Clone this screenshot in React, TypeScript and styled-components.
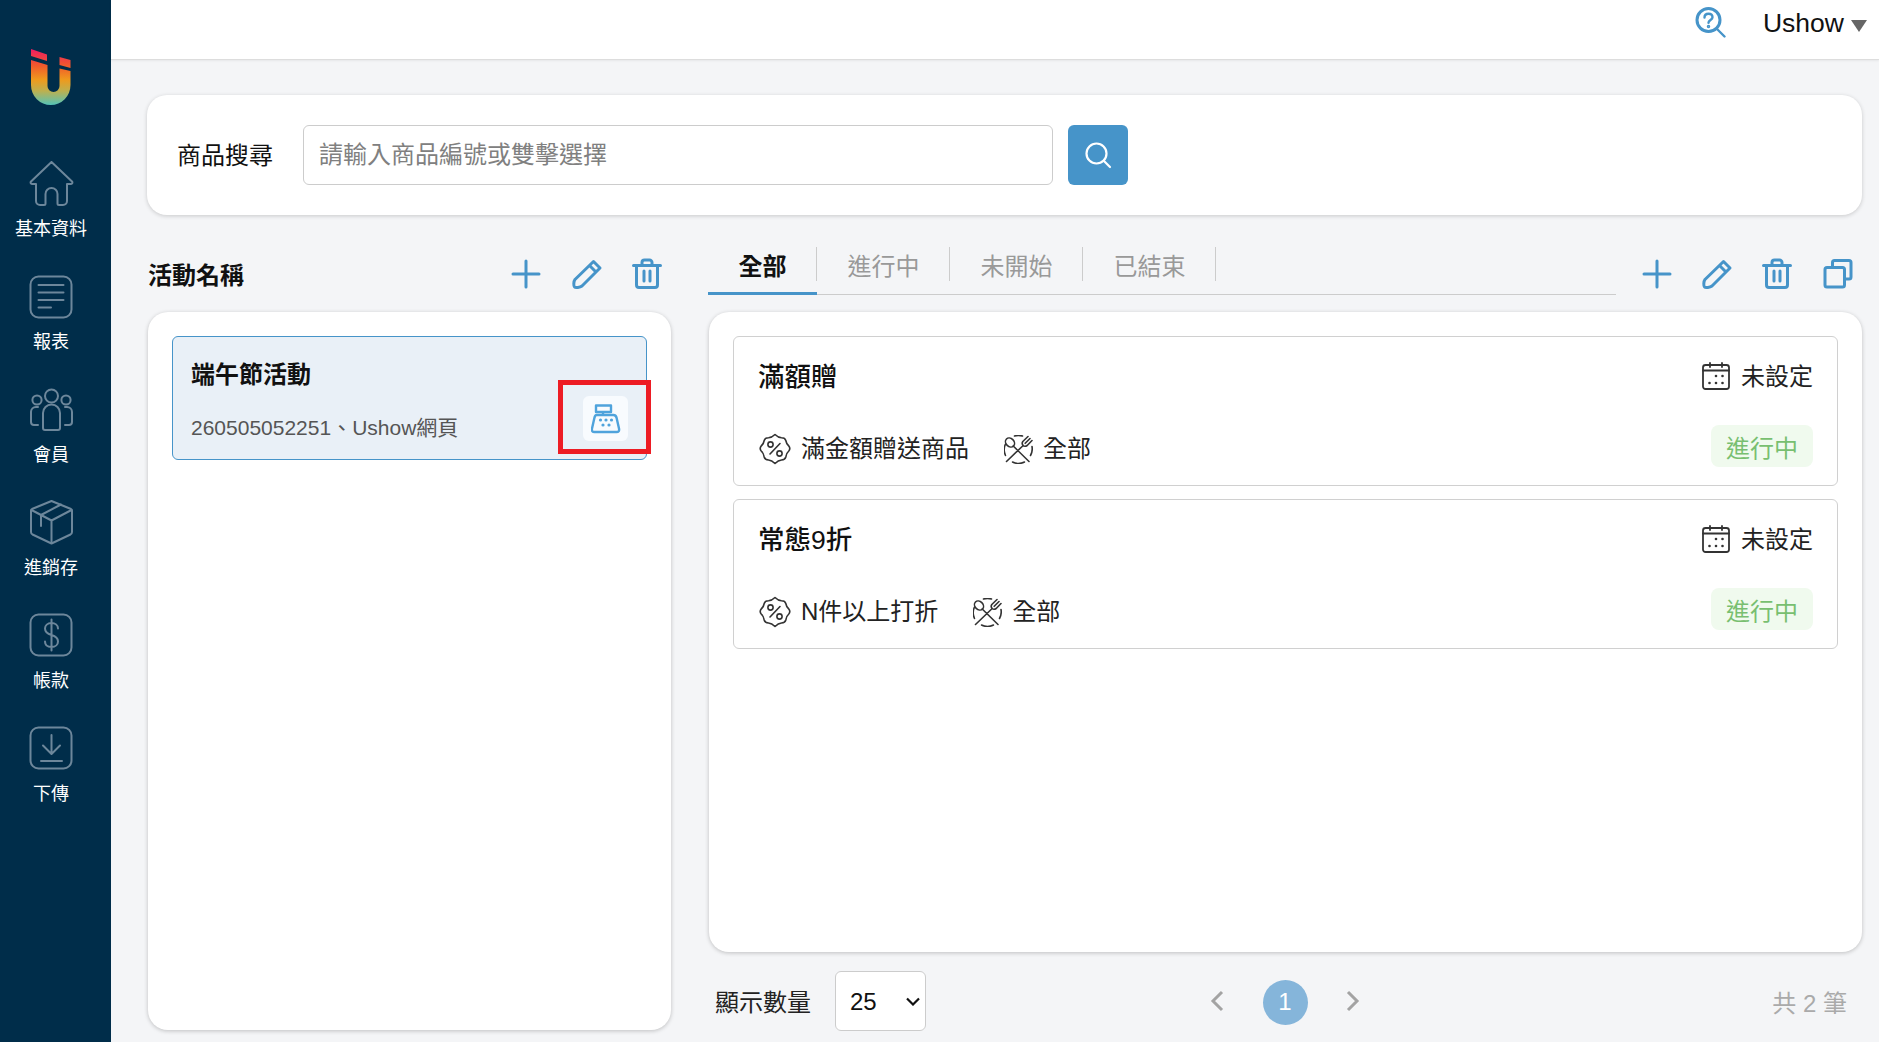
import React from "react";
import styled, { createGlobalStyle } from "styled-components";

const Global = createGlobalStyle`
  html, body { margin: 0; padding: 0; height: 100%; background: #f4f5f7; overflow: hidden; }
  #root { height: 100%; }
  * { box-sizing: border-box; }
  body { font-family: "Liberation Sans", "Noto Sans CJK TC", sans-serif; color: #111; }
`;

const Shell = styled.div`display: flex; height: 1042px;`;
const Sidebar = styled.nav`
  width: 111px; flex: none; background: #002d4a;
  display: flex; flex-direction: column; align-items: center; padding: 49px 9px 0 0;
`;
const LogoWrap = styled.div`width: 40px; height: 56px; margin-bottom: 56px;`;
const NavItem = styled.div`
  height: 113px; width: 100%; display: flex; flex-direction: column; align-items: center;
  color: #fff; font-size: 18px; line-height: 24px;
  svg { display: block; margin-bottom: 11px; }
`;
const Main = styled.div`flex: 1; min-width: 0; display: flex; flex-direction: column;`;
const TopBar = styled.header`
  height: 60px; flex: none; background: #fff; border-bottom: 1px solid #ddd;
  box-shadow: 0 1px 2px rgba(0,0,0,.06);
  display: flex; align-items: flex-start; justify-content: flex-end; padding: 7px 12px 0 0;
`;
const UserName = styled.span`font-size: 26.5px; line-height: 32px; margin-left: 37px; margin-right: 7px; color: #111;`;
const Caret = styled.span`
  width: 0; height: 0; margin-top: 13px;
  border-left: 8px solid transparent; border-right: 8px solid transparent; border-top: 12px solid #666;
`;
const Content = styled.div`flex: 1; min-height: 0; padding: 35px 17px 12px 36px; display: flex; flex-direction: column;`;
const SearchCard = styled.section`
  height: 120px; flex: none; background: #fff; border-radius: 20px;
  box-shadow: 0 1px 4px rgba(0,0,0,.18);
  display: flex; align-items: center; padding-left: 30px;
`;
const SearchLabel = styled.label`font-size: 24px; line-height: 32px; width: 126px; margin-top: 2px;`;
const SearchInput = styled.input`
  width: 750px; height: 60px; border: 1px solid #ccc; border-radius: 6px; padding: 0 15px;
  font: 24px "Liberation Sans", "Noto Sans CJK TC", sans-serif; outline: none; background: #fff;
  &::placeholder { color: #808080; opacity: 1; }
`;
const SearchButton = styled.button`
  width: 60px; height: 60px; margin-left: 15px; border: 0; border-radius: 6px; background: #4694c9;
  display: flex; align-items: center; justify-content: center; padding: 0;
`;
const Columns = styled.div`flex: 1; min-height: 0; display: grid; grid-template-columns: 525px 1fr; column-gap: 37px;`;
const Column = styled.div`display: flex; flex-direction: column; min-height: 0;`;
const LeftColumn = styled(Column)`padding: 0 1px;`;
const LeftHead = styled.div`height: 97px; flex: none; display: flex; align-items: flex-start; padding-top: 45px; justify-content: space-between;`;
const HeadTitle = styled.h2`margin: 0; font-size: 24px; line-height: 32px; font-weight: 700;`;
const IconRow = styled.div`display: flex; gap: 24.5px; margin-top: -4px; margin-right: 6px;`;
const IconSlot = styled.span`width: 36px; height: 36px; display: flex; align-items: center; justify-content: center;`;
const RightHead = styled.div`height: 97px; flex: none; display: flex; align-items: flex-start; padding-top: 32px;`;
const Tabs = styled.div`width: 908px; height: 48px; margin-left: -1px; display: flex; border-bottom: 1px solid #ccc; flex: none;`;
const Tab = styled.div<{ $active?: boolean }>`
  width: 133px; height: 47px; position: relative; display: flex; align-items: flex-start; justify-content: center;
  padding-top: 4px;
  font-size: 24px; line-height: 32px;
  font-weight: ${p => (p.$active ? 700 : 400)};
  color: ${p => (p.$active ? "#111" : "#999")};
  ${p => p.$active ? "width: 109px; border-bottom: 3px solid #4694c9; height: 48px;" : ""}
  &::after { content: ""; position: absolute; right: 0; top: 0; height: 34px; width: 1px; background: #ccc; }
`;
const RightIcons = styled(IconRow)`margin: 9px 0 0 23px; gap: 24.2px;`;
const ListCard = styled.section<{ $gap: number }>`
  flex: 1; min-height: 0; background: #fff; border-radius: 20px; padding: 24px;
  box-shadow: 0 1px 4px rgba(0,0,0,.22);
  display: flex; flex-direction: column; gap: ${p => p.$gap}px;
`;
const ActivityItem = styled.article`
  position: relative; height: 124px; background: #e9f0f7; border: 1px solid #4694c9; border-radius: 6px;
  padding: 20px 18px 0;
`;
const ActivityName = styled.div`font-size: 24px; font-weight: 700; line-height: 36px;`;
const ActivityInfo = styled.div`font-size: 21px; line-height: 28px; color: #555; margin-top: 21px;`;
const Highlight = styled.div`
  position: absolute; left: 385px; top: 43px; width: 93px; height: 74px; border: 5px solid #ed1c24;
  display: flex; align-items: center; justify-content: center;
`;
const StoreChip = styled.div`
  width: 45px; height: 45px; margin: 3px 0 0 2px; background: #f8fbfe; border-radius: 6px;
  display: flex; align-items: center; justify-content: center;
`;
const Entry = styled.article`
  height: 150px; flex: none; border: 1px solid #d0d0d0; border-radius: 6px; padding: 0 24px;
  display: flex; flex-direction: column;
`;
const EntryTop = styled.div`height: 80px; display: flex; align-items: center; justify-content: space-between;`;
const EntryName = styled.div`font-size: 26.5px; font-weight: 500; line-height: 34px;`;
const DateBox = styled.div`display: flex; align-items: center; gap: 11px; font-size: 24px; line-height: 32px; color: #222; margin-top: -1px; svg { margin-top: -2px; }`;
const EntryBottom = styled.div`height: 48px; margin-top: 8px; display: flex; align-items: center; justify-content: space-between;`;
const Tags = styled.div`display: flex; align-items: center; margin-left: 1px;`;
const Tag = styled.div`
  display: flex; align-items: center; font-size: 24px; line-height: 32px; color: #222; margin-right: 35px;
  svg { margin-right: 10px; display: block; }
`;
const Status = styled.div`
  width: 102px; height: 42px; background: #f0faee; color: #78bf70; border-radius: 8px;
  display: flex; align-items: center; justify-content: center; font-size: 24px; margin-top: -6px;
`;
const Pager = styled.div`height: 78px; flex: none; display: flex; align-items: center; padding: 20px 15px 0 6px;`;
const PagerLabel = styled.span`font-size: 24px; line-height: 32px; color: #222; margin-top: 3px;`;
const PageSelect = styled.select`
  appearance: none; width: 91px; height: 60px; margin-left: 24px; border: 1px solid #ccc; border-radius: 6px;
  background: #fff url("data:image/svg+xml,%3Csvg xmlns='http://www.w3.org/2000/svg' width='14' height='9'%3E%3Cpath d='M1 1.500L7 7.500L13 1.500' fill='none' stroke='%23111' stroke-width='2.200'/%3E%3C/svg%3E") no-repeat right 5px center;
  font: 24px "Liberation Sans", sans-serif; padding-left: 14px; color: #111; outline: none;
`;
const PageNav = styled.div`
  margin-left: 284px; display: flex; align-items: center; width: 150px; justify-content: space-between;
`;
const PageDot = styled.div`
  width: 45px; height: 45px; border-radius: 50%; background: #85b5da; color: #fff;
  display: flex; align-items: center; justify-content: center; font-size: 24px; margin-top: 2px;
`;
const Total = styled.span`margin-left: auto; font-size: 24px; color: #aaa;`;

const Logo = () => (
  <LogoWrap>
    <svg width="40" height="56" viewBox="0 0 40 56">
      <defs>
        <linearGradient id="lg" x1="0" y1="0" x2="0" y2="1">
          <stop offset="0" stopColor="#ee1c62" />
          <stop offset="0.3" stopColor="#f15a2b" />
          <stop offset="0.55" stopColor="#ee9a1d" />
          <stop offset="0.75" stopColor="#bdb04f" />
          <stop offset="1" stopColor="#54c4b8" />
        </linearGradient>
      </defs>
      <path fill="url(#lg)" d="M0 0 L16 5.500 V12 L0 7 Z M28.500 8 L39.500 11 V19 L28.500 16 Z M0 11 L16.500 16 V37 A6 6 0 0 0 28.500 37 V19.500 L39.500 22 V36 A19.750 20 0 0 1 0 36 Z" />
    </svg>
  </LogoWrap>
);

const NavIcon = ({ children }: { children: React.ReactNode }) => (
  <svg width="45" height="45" viewBox="0 0 45 45" fill="none" stroke="#6d879b" strokeWidth="2" strokeLinecap="round" strokeLinejoin="round">{children}</svg>
);
const navIcons: Record<string, React.ReactNode> = {
  home: <path d="M22.500 1 L43 20.500 a1.500 1.500 0 0 1 -1 2.500 H38 V40 a4 4 0 0 1 -4 4 H30 a1.500 1.500 0 0 1 -1.500 -1.500 V33 a6 6 0 0 0 -12 0 V42.500 a1.500 1.500 0 0 1 -1.500 1.500 H11 a4 4 0 0 1 -4 -4 V23 H3 a1.500 1.500 0 0 1 -1 -2.500 Z" />,
  report: <><rect x="1.500" y="2.500" width="41" height="41" rx="8" /><path d="M9.500 11h25M9.500 18.500h25M9.500 26h25M9.500 33.500h12.500" /></>,
  member: <><circle cx="22.500" cy="9" r="6.500" /><circle cx="8" cy="13" r="4.600" /><circle cx="37" cy="13" r="4.600" /><path d="M14 41 V26 a8.500 8.500 0 0 1 8.500 -8.500 a8.500 8.500 0 0 1 8.500 8.500 V41 a2 2 0 0 1 -2 2 H16 a2 2 0 0 1 -2 -2 Z" /><path d="M9 38 H5 a3 3 0 0 1 -3 -3 V25 a5 5 0 0 1 5 -5 h2 M36 38 h4 a3 3 0 0 0 3 -3 V25 a5 5 0 0 0 -5 -5 h-2" /></>,
  box: <><path d="M22.500 1 L42 9 a2 2 0 0 1 1 2 V32 a3 3 0 0 1 -1.500 2.500 L22.500 43.500 L3.500 34.500 A3 3 0 0 1 2 32 V11 a2 2 0 0 1 1 -2 Z" /><path d="M2.500 10 L22.500 20.500 L42.500 10 M22.500 20.500 V43 M12 15 V26 M12 15 L32 4.500" /></>,
  money: <><rect x="1.500" y="1.500" width="41" height="41" rx="8" /><path d="M29 15.500 C29 12 26 10 22.500 10 C18.500 10 16 12.500 16 15.500 C16 19.500 19 21 22.500 22 C26 23 29 24.500 29 28.500 C29 31.500 26.500 34 22.500 34 C18.500 34 16 32 16 28.500 M22.500 6.500 V37.500" /></>,
  down: <><rect x="1.500" y="1.500" width="41" height="41" rx="8" /><path d="M22.500 9 V27 M14 19.500 L22.500 28 L31 19.500 M12 35 H33" /></>,
};
const navItems = [["home", "基本資料"], ["report", "報表"], ["member", "會員"], ["box", "進銷存"], ["money", "帳款"], ["down", "下傳"]];

const Act = ({ children }: { children: React.ReactNode }) => (
  <IconSlot>
    <svg width="32" height="32" viewBox="0 0 32 32" fill="none" stroke="#4694c9" strokeWidth="3" strokeLinecap="round" strokeLinejoin="round">{children}</svg>
  </IconSlot>
);
const Plus = () => <Act><path d="M3 16H29M16 3V29" /></Act>;
const Pencil = () => <Act><path d="M22.500 3.500 L29 10 L11 28 C9 29.500 4.500 30 3.500 29 C2.500 28 2.500 23.500 4 21.500 Z M18.500 7.500 L25 14" /></Act>;
const Trash = () => <Act><path d="M2.500 7.500H29.500M11 7V4.500A2.500 2.500 0 0 1 13.500 2H18.500A2.500 2.500 0 0 1 21 4.500V7M5.500 8V27A2.500 2.500 0 0 0 8 29.500H24A2.500 2.500 0 0 0 26.500 27V8M13 13V23M19 13V23" /></Act>;
const Copy = () => <Act><path d="M10.500 9V4.500A2 2 0 0 1 12.500 2.500H27A2 2 0 0 1 29 4.500V19A2 2 0 0 1 27 21H22.500" /><rect x="3" y="9.500" width="19.500" height="19.500" rx="2" /></Act>;

const Calendar = () => (
  <svg width="28" height="28" viewBox="0 0 28 28" fill="none" stroke="#333" strokeWidth="1.800" strokeLinecap="round">
    <rect x="1" y="3" width="26" height="24" rx="2.500" />
    <path d="M1 8.500H27M8 1V5M20 1V5" />
    <g fill="#333" stroke="none"><circle cx="14" cy="14" r="1.300" /><circle cx="20.500" cy="14" r="1.300" /><circle cx="7.500" cy="21" r="1.300" /><circle cx="14" cy="21" r="1.300" /><circle cx="20.500" cy="21" r="1.300" /></g>
  </svg>
);
const PercentBadge = () => (
  <svg width="32" height="32" viewBox="0 0 32 32" fill="none" stroke="#333" strokeWidth="1.600" strokeLinecap="round" strokeLinejoin="round">
    <path d="M16 1.500 C18 3.500 20 4.600 22.500 4.700 C24.500 4.700 26.300 5.500 26.800 7.500 C27.200 9.800 27.800 11.500 29.800 13 C31 14.500 31 16.500 29.800 18 C28 19.500 27.200 21.500 26.800 24 C26.300 26 24.500 26.800 22.500 27 C20 27.200 18 28.500 16 30.500 C14 28.500 12 27.200 9.500 27 C7.500 26.800 5.700 26 5.200 24 C4.800 21.500 4 19.500 2.200 18 C1 16.500 1 14.500 2.200 13 C4.200 11.500 4.800 9.800 5.200 7.500 C5.700 5.500 7.500 4.700 9.500 4.700 C12 4.600 14 3.500 16 1.500 Z" />
    <circle cx="11.500" cy="11.500" r="2.600" />
    <circle cx="20.500" cy="20.500" r="2.600" />
    <path d="M21 10.500 L11 21" />
  </svg>
);
const Cutlery = () => (
  <svg width="29" height="29" viewBox="0 0 29 29" fill="none" stroke="#333" strokeWidth="1.600" strokeLinecap="round" strokeLinejoin="round">
    <path d="M10.500 1 A13.500 13.500 0 0 1 18.500 1 M1.500 9 A13.500 13.500 0 0 0 1.500 20.500 M8.500 27 A13.500 13.500 0 0 0 20.500 27 M28 11.500 A13.500 13.500 0 0 1 26.500 20.500" />
    <ellipse cx="6" cy="7.500" rx="4" ry="5" transform="rotate(-45 6 7.500)" />
    <path d="M9.200 11 L25 26.500 M24 1.500 L18.800 6.500 C17.800 8 18.200 9.500 19.200 10.500 C20.200 11.500 21.700 11.500 23.200 10.500 L28 5.500 M26 3.500 L21.200 8.300 M19.200 10.500 L2.500 26.500" />
  </svg>
);
const Register = () => (
  <svg width="30" height="30" viewBox="0 0 30 30" fill="none" stroke="#4fa3dc" strokeWidth="2.400" strokeLinejoin="round">
    <rect x="5" y="1.500" width="15" height="6.500" />
    <path d="M12 8V11M5.500 11H22.500C24 11 25 12 25.500 13.500L28 24.500C28.500 27 27.500 28 25.500 28H3.500C1.500 28 .5 27 1 24.500L3.500 13.500C4 12 4.500 11 5.500 11Z" />
    <g fill="#4fa3dc" stroke="none"><circle cx="9.500" cy="16" r="1.600" /><circle cx="15" cy="16" r="1.600" /><circle cx="20.500" cy="16" r="1.600" /><circle cx="12" cy="21" r="1.600" /><circle cx="18" cy="21" r="1.600" /></g>
  </svg>
);
const Chevron = ({ dir }: { dir: "l" | "r" }) => (
  <svg width="14" height="22" viewBox="0 0 14 22" fill="none" stroke="#a3a3a3" strokeWidth="3">
    <path d={dir === "l" ? "M12 2L3 11L12 20" : "M2 2L11 11L2 20"} />
  </svg>
);

const ActionIcons = ({ copy, as: Wrap }: { copy?: boolean; as: typeof IconRow }) => (
  <Wrap><Plus /><Pencil /><Trash />{copy && <Copy />}</Wrap>
);

const entries = [
  { name: "滿額贈", tag: "滿金額贈送商品" },
  { name: "常態9折", tag: "N件以上打折" },
];

export default function App() {
  return (
    <Shell>
      <Global />
      <Sidebar>
        <Logo />
        {navItems.map(([k, label]) => (
          <NavItem key={k}><NavIcon>{navIcons[k]}</NavIcon>{label}</NavItem>
        ))}
      </Sidebar>
      <Main>
        <TopBar>
          <svg width="31" height="31" viewBox="0 0 31 31" fill="none" stroke="#4694c9" strokeWidth="3" strokeLinecap="round">
            <circle cx="13.500" cy="13" r="11.500" />
            <path d="M22 22L29.500 29.500M9.500 10.500C9.500 8 11.500 6.800 13.500 6.800C15.800 6.800 17.500 8.200 17.500 10.300C17.500 13 13.500 13 13.500 15.800" strokeWidth="2.400" />
            <circle cx="13.500" cy="19.500" r="1" strokeWidth="1.500" />
          </svg>
          <UserName>Ushow</UserName>
          <Caret />
        </TopBar>
        <Content>
          <SearchCard>
            <SearchLabel>商品搜尋</SearchLabel>
            <SearchInput placeholder="請輸入商品編號或雙擊選擇" />
            <SearchButton>
              <svg width="28" height="28" viewBox="0 0 28 28" fill="none" stroke="#fff" strokeWidth="2.200" strokeLinecap="round">
                <circle cx="12.500" cy="12.500" r="10" /><path d="M20 20L26 26" />
              </svg>
            </SearchButton>
          </SearchCard>
          <Columns>
            <LeftColumn>
              <LeftHead>
                <HeadTitle>活動名稱</HeadTitle>
                <ActionIcons as={IconRow} />
              </LeftHead>
              <ListCard $gap={12}>
                <ActivityItem>
                  <ActivityName>端午節活動</ActivityName>
                  <ActivityInfo>260505052251、Ushow網頁</ActivityInfo>
                  <Highlight><StoreChip><Register /></StoreChip></Highlight>
                </ActivityItem>
              </ListCard>
            </LeftColumn>
            <Column>
              <RightHead>
                <Tabs>
                  <Tab $active>全部</Tab>
                  <Tab>進行中</Tab>
                  <Tab>未開始</Tab>
                  <Tab>已結束</Tab>
                </Tabs>
                <ActionIcons as={RightIcons} copy />
              </RightHead>
              <ListCard $gap={13}>
                {entries.map(e => (
                  <Entry key={e.name}>
                    <EntryTop>
                      <EntryName>{e.name}</EntryName>
                      <DateBox><Calendar />未設定</DateBox>
                    </EntryTop>
                    <EntryBottom>
                      <Tags>
                        <Tag><PercentBadge />{e.tag}</Tag>
                        <Tag><Cutlery />全部</Tag>
                      </Tags>
                      <Status>進行中</Status>
                    </EntryBottom>
                  </Entry>
                ))}
              </ListCard>
              <Pager>
                <PagerLabel>顯示數量</PagerLabel>
                <PageSelect defaultValue="25">
                  <option>10</option><option>25</option><option>50</option>
                </PageSelect>
                <PageNav>
                  <Chevron dir="l" />
                  <PageDot>1</PageDot>
                  <Chevron dir="r" />
                </PageNav>
                <Total>共 2 筆</Total>
              </Pager>
            </Column>
          </Columns>
        </Content>
      </Main>
    </Shell>
  );
}
